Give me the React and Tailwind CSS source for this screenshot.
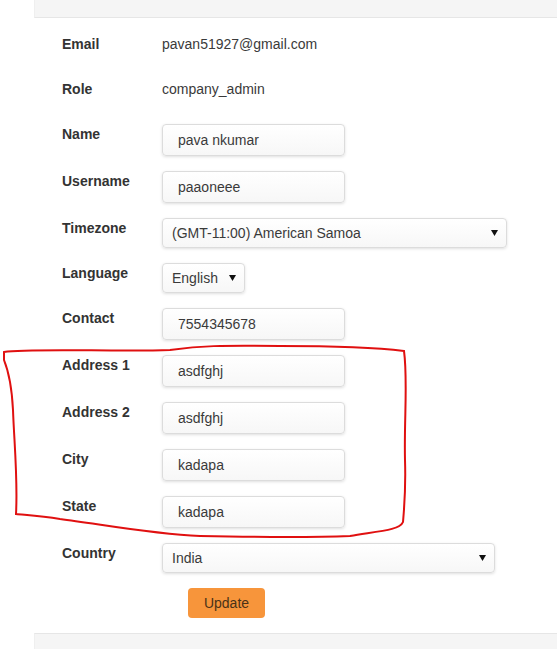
import React from "react";

const Arrow = () => (
  <svg width="7" height="6" viewBox="0 0 7 6" className="shrink-0">
    <path d="M0 0 L7 0 L3.5 6 Z" fill="#111" />
  </svg>
);

const boxCls =
  "bg-gradient-to-b from-white to-[#f7f7f7] border border-[#dcdcdc] rounded-[4px] shadow-[0_1px_3px_rgba(0,0,0,0.13)] text-[14px] text-[#3a3a3a] flex items-center";

function TextRow({ label, value }) {
  return (
    <div className="flex h-[30px]">
      <div className="w-[100px] font-bold leading-[20px] text-[#333]">{label}</div>
      <div className="leading-[20px] text-[#3a3a3a]">{value}</div>
    </div>
  );
}

function InputRow({ label, value }) {
  return (
    <div className="flex h-[32px]">
      <div className="w-[100px] font-bold leading-[20px] text-[#333]">{label}</div>
      <div className={`${boxCls} w-[183px] h-[32px] pl-[15px]`}>{value}</div>
    </div>
  );
}

function SelectRow({ label, value, width }) {
  return (
    <div className="flex h-[30px]">
      <div className="w-[100px] font-bold leading-[20px] text-[#333]">{label}</div>
      <div className={`${boxCls} h-[30px] pl-[9px] pr-[8px] justify-between`} style={{ width }}>
        <span>{value}</span>
        <Arrow />
      </div>
    </div>
  );
}

export default function App() {
  return (
    <div
      className="relative w-[557px] h-[649px] bg-white overflow-hidden text-[14px]"
      style={{ fontFamily: '"Liberation Sans", Arial, sans-serif' }}
    >
      <div className="ml-[34px] flex flex-col h-full">
        <div className="h-[18px] bg-[#f5f5f5] border-b border-[#e6e6e6] border-l border-l-[#efefef]" />
        <div className="pl-[28px] pt-[16px] pb-[15px] flex flex-col gap-[15px]">
          <TextRow label="Email" value="pavan51927@gmail.com" />
          <TextRow label="Role" value="company_admin" />
          <InputRow label="Name" value="pava nkumar" />
          <InputRow label="Username" value="paaoneee" />
          <SelectRow label="Timezone" value="(GMT-11:00) American Samoa" width={345} />
          <SelectRow label="Language" value="English" width={83} />
          <InputRow label="Contact" value="7554345678" />
          <InputRow label="Address 1" value="asdfghj" />
          <InputRow label="Address 2" value="asdfghj" />
          <InputRow label="City" value="kadapa" />
          <InputRow label="State" value="kadapa" />
          <SelectRow label="Country" value="India" width={333} />
          <div className="flex h-[30px]">
            <div className="w-[126px]" />
            <button className="w-[77px] h-[30px] rounded-[4px] bg-[#f7953b] text-[#4b3217] text-[14px]">
              Update
            </button>
          </div>
        </div>
        <div className="flex-1 bg-[#f5f5f5] border-t border-[#e6e6e6] border-l border-l-[#efefef]" />
      </div>
      <svg
        className="absolute inset-0 pointer-events-none"
        width="557"
        height="649"
        viewBox="0 0 557 649"
      >
        <path
          d="M4,352 C30,348 120,352 170,350 C200,346 220,345 280,346 C340,346 380,348 404,351 C408,380 404,420 405,460 C406,490 404,510 403,522 C400,530 380,531 350,536 C300,538 250,537 200,536 C150,534 100,524 60,519 C40,516 25,515 16,514 C18,480 14,440 13,410 C12,390 8,370 4,360 Z"
          fill="none"
          stroke="#e01010"
          strokeWidth="2"
        />
      </svg>
    </div>
  );
}
